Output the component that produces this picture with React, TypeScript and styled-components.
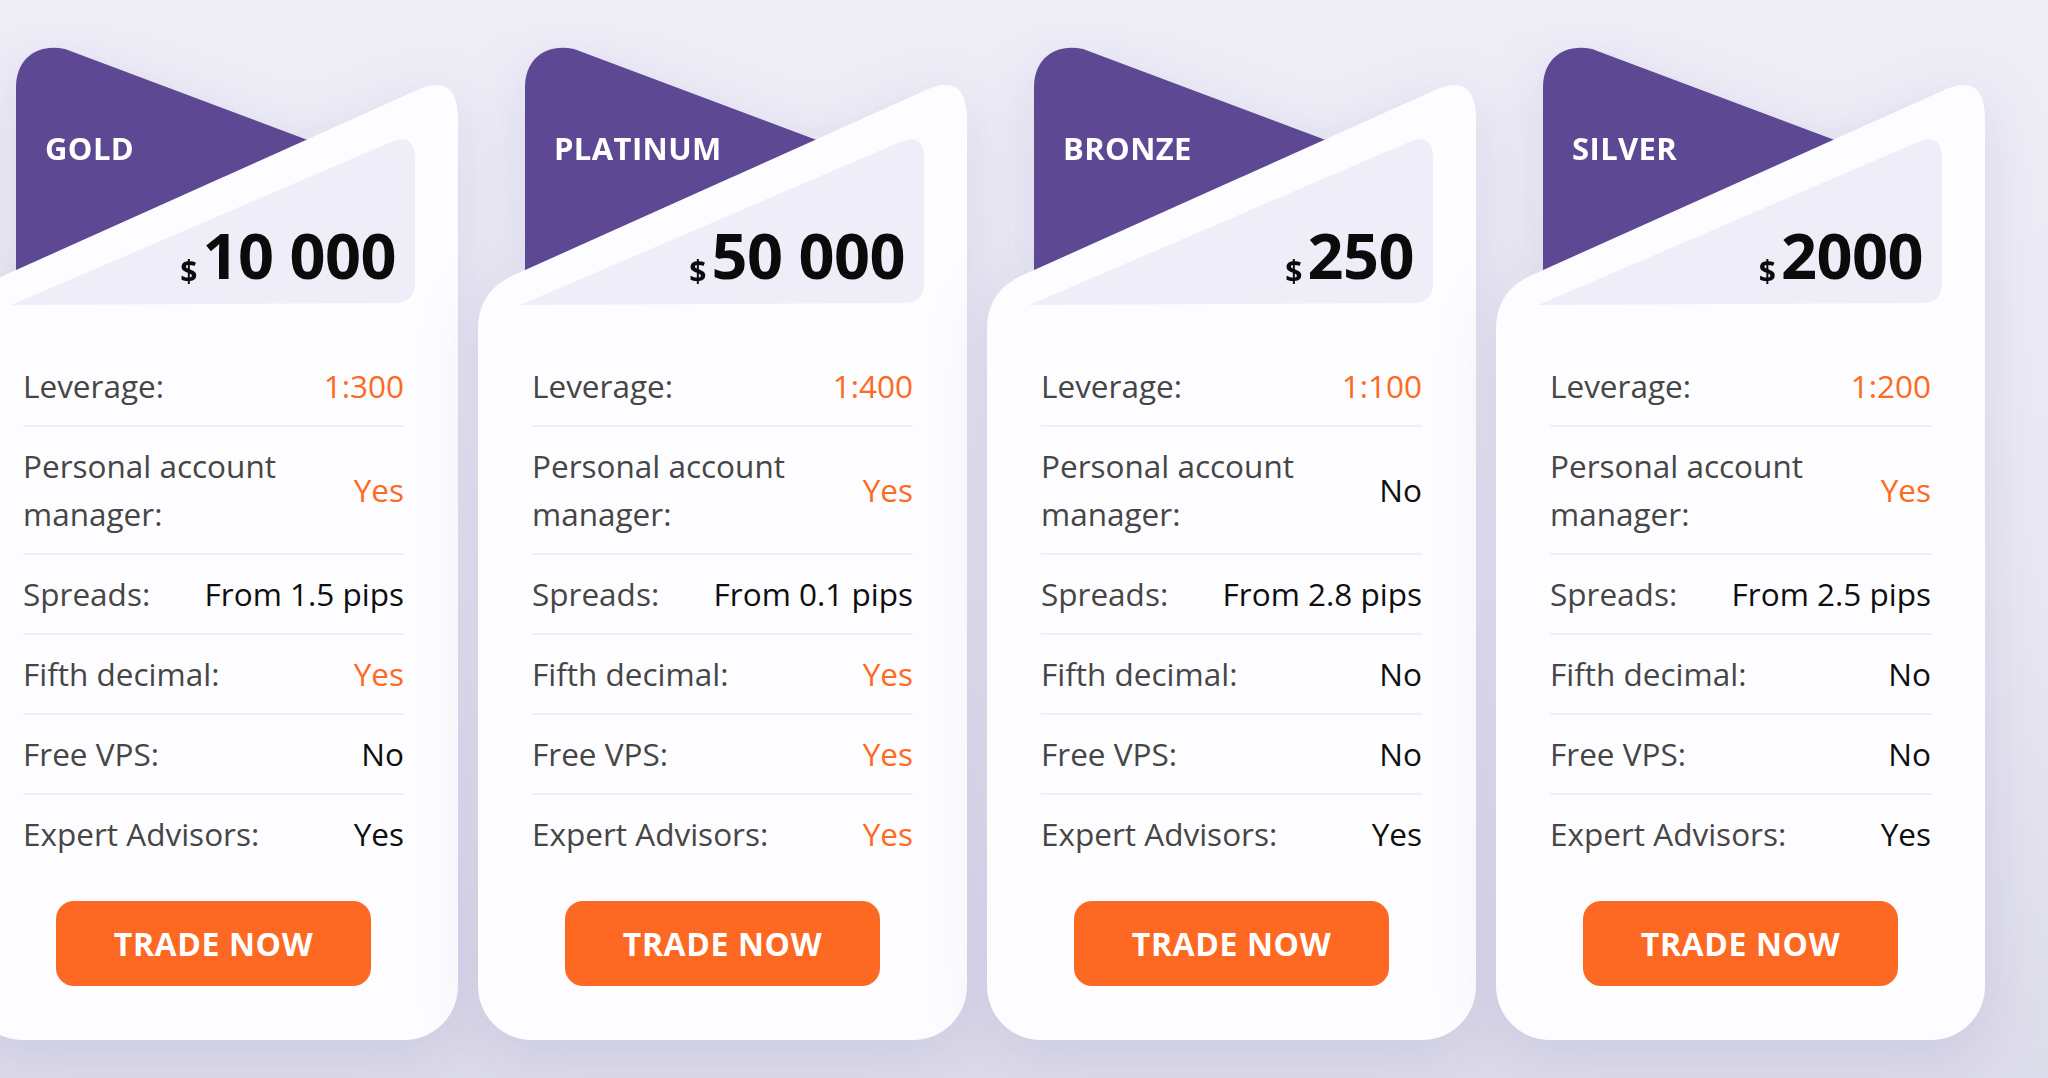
import styled, { createGlobalStyle } from "styled-components";
import React from "react";

const GlobalStyle = createGlobalStyle`
  html, body {
    margin: 0;
    padding: 0;
  }
  body {
    width: 2048px;
    height: 1078px;
    overflow: hidden;
    background: linear-gradient(180deg, #efeef7 0%, #e8e7f2 55%, #dddcea 100%);
    font-family: "Open Sans", "Noto Sans", sans-serif;
  }
`;

const Wrapper = styled.div`
  display: flex;
  column-gap: 20px;
  padding-top: 47px;
  margin-left: -31px;
`;

const Card = styled.div`
  flex: 0 0 489px;
  width: 489px;
  display: flex;
  flex-direction: column;
  filter: drop-shadow(0 14px 30px rgba(86, 78, 160, 0.14));
`;

const Header = styled.div`
  position: relative;
  height: 300px;
  box-sizing: border-box;
  padding: 85px 62px 60px 76px;
  display: flex;
  flex-direction: column;
`;

const HeaderArt = styled.svg`
  position: absolute;
  left: 0;
  top: 0;
  width: 489px;
  height: 300px;
`;

const Title = styled.div`
  position: relative;
  color: #ffffff;
  font-size: 31px;
  line-height: 32px;
  font-weight: 700;
  letter-spacing: 0.4px;
`;

const Price = styled.div`
  position: relative;
  margin-top: auto;
  align-self: flex-end;
  display: flex;
  align-items: baseline;
  column-gap: 5px;
  color: #0b0b0b;
  font-weight: 700;
`;

const Currency = styled.span`
  font-size: 30px;
  line-height: 30px;
  transform: translateY(3px);
`;

const Amount = styled.span`
  font-size: 63px;
  line-height: 64px;
  letter-spacing: -0.5px;
`;

const Body = styled.div`
  background: #fdfdff;
  border-radius: 0 0 54px 54px;
  padding: 0 54px 54px 54px;
  display: flex;
  flex-direction: column;
`;

const Row = styled.div`
  display: flex;
  justify-content: space-between;
  align-items: center;
  padding: 15px 0;
  border-bottom: 2px solid #efeff6;
  font-size: 31.5px;
  line-height: 48px;

  &:last-of-type {
    border-bottom: none;
  }
`;

const Label = styled.span`
  color: #464646;
  max-width: 280px;
`;

const Value = styled.span<{ $accent?: boolean }>`
  color: ${(p) => (p.$accent ? "#fd6a22" : "#0e0e0e")};
  text-align: right;
  white-space: nowrap;
`;

const TradeButton = styled.button`
  align-self: center;
  margin-top: 28px;
  width: 315px;
  height: 85px;
  border: none;
  border-radius: 18px;
  background: #fd6822;
  color: #ffffff;
  font-family: inherit;
  font-size: 32px;
  font-weight: 700;
  letter-spacing: 0.6px;
  cursor: pointer;
`;

type Plan = {
  name: string;
  price: string;
  leverage: string;
  manager: string;
  spreads: string;
  fifth: string;
  vps: string;
  advisors: string;
};

const plans: Plan[] = [
  { name: "GOLD", price: "10 000", leverage: "1:300", manager: "Yes", spreads: "From 1.5 pips", fifth: "Yes", vps: "No", advisors: "Yes" },
  { name: "PLATINUM", price: "50 000", leverage: "1:400", manager: "Yes", spreads: "From 0.1 pips", fifth: "Yes", vps: "Yes", advisors: "Yes" },
  { name: "BRONZE", price: "250", leverage: "1:100", manager: "No", spreads: "From 2.8 pips", fifth: "No", vps: "No", advisors: "Yes" },
  { name: "SILVER", price: "2000", leverage: "1:200", manager: "Yes", spreads: "From 2.5 pips", fifth: "No", vps: "No", advisors: "Yes" },
];

// which values are shown in orange for each plan
const accentMap: Record<string, string[]> = {
  GOLD: ["leverage", "manager", "fifth"],
  PLATINUM: ["leverage", "manager", "fifth", "vps", "advisors"],
  BRONZE: ["leverage"],
  SILVER: ["leverage", "manager"],
};

function Art() {
  return (
    <HeaderArt viewBox="0 0 489 300">
      <path
        d="M47 300 L47 40 C47 12 68 -4 96 2 L440 131 L440 300 Z"
        fill="#5d4894"
      />
      <path
        d="M0 300 L0 282 Q0 244 36 228 L446 44 Q489 24 489 72 L489 300 Z"
        fill="#fdfdff"
      />
      <path
        d="M42 258 L422 95 Q446 85 446 112 L446 236 Q446 256 426 256 L44 258 Z"
        fill="#efeef8"
      />
    </HeaderArt>
  );
}

function PlanCard({ plan }: { plan: Plan }) {
  const acc = accentMap[plan.name];
  const rows: [string, string, string][] = [
    ["Leverage:", plan.leverage, "leverage"],
    ["Personal account manager:", plan.manager, "manager"],
    ["Spreads:", plan.spreads, "spreads"],
    ["Fifth decimal:", plan.fifth, "fifth"],
    ["Free VPS:", plan.vps, "vps"],
    ["Expert Advisors:", plan.advisors, "advisors"],
  ];
  return (
    <Card>
      <Header>
        <Art />
        <Title>{plan.name}</Title>
        <Price>
          <Currency>$</Currency>
          <Amount>{plan.price}</Amount>
        </Price>
      </Header>
      <Body>
        {rows.map(([label, value, key]) => (
          <Row key={key}>
            <Label>{label}</Label>
            <Value $accent={acc.includes(key)}>{value}</Value>
          </Row>
        ))}
        <TradeButton>TRADE NOW</TradeButton>
      </Body>
    </Card>
  );
}

function App() {
  return (
    <>
      <GlobalStyle />
      <Wrapper>
        {plans.map((p) => (
          <PlanCard key={p.name} plan={p} />
        ))}
      </Wrapper>
    </>
  );
}

export default App;
